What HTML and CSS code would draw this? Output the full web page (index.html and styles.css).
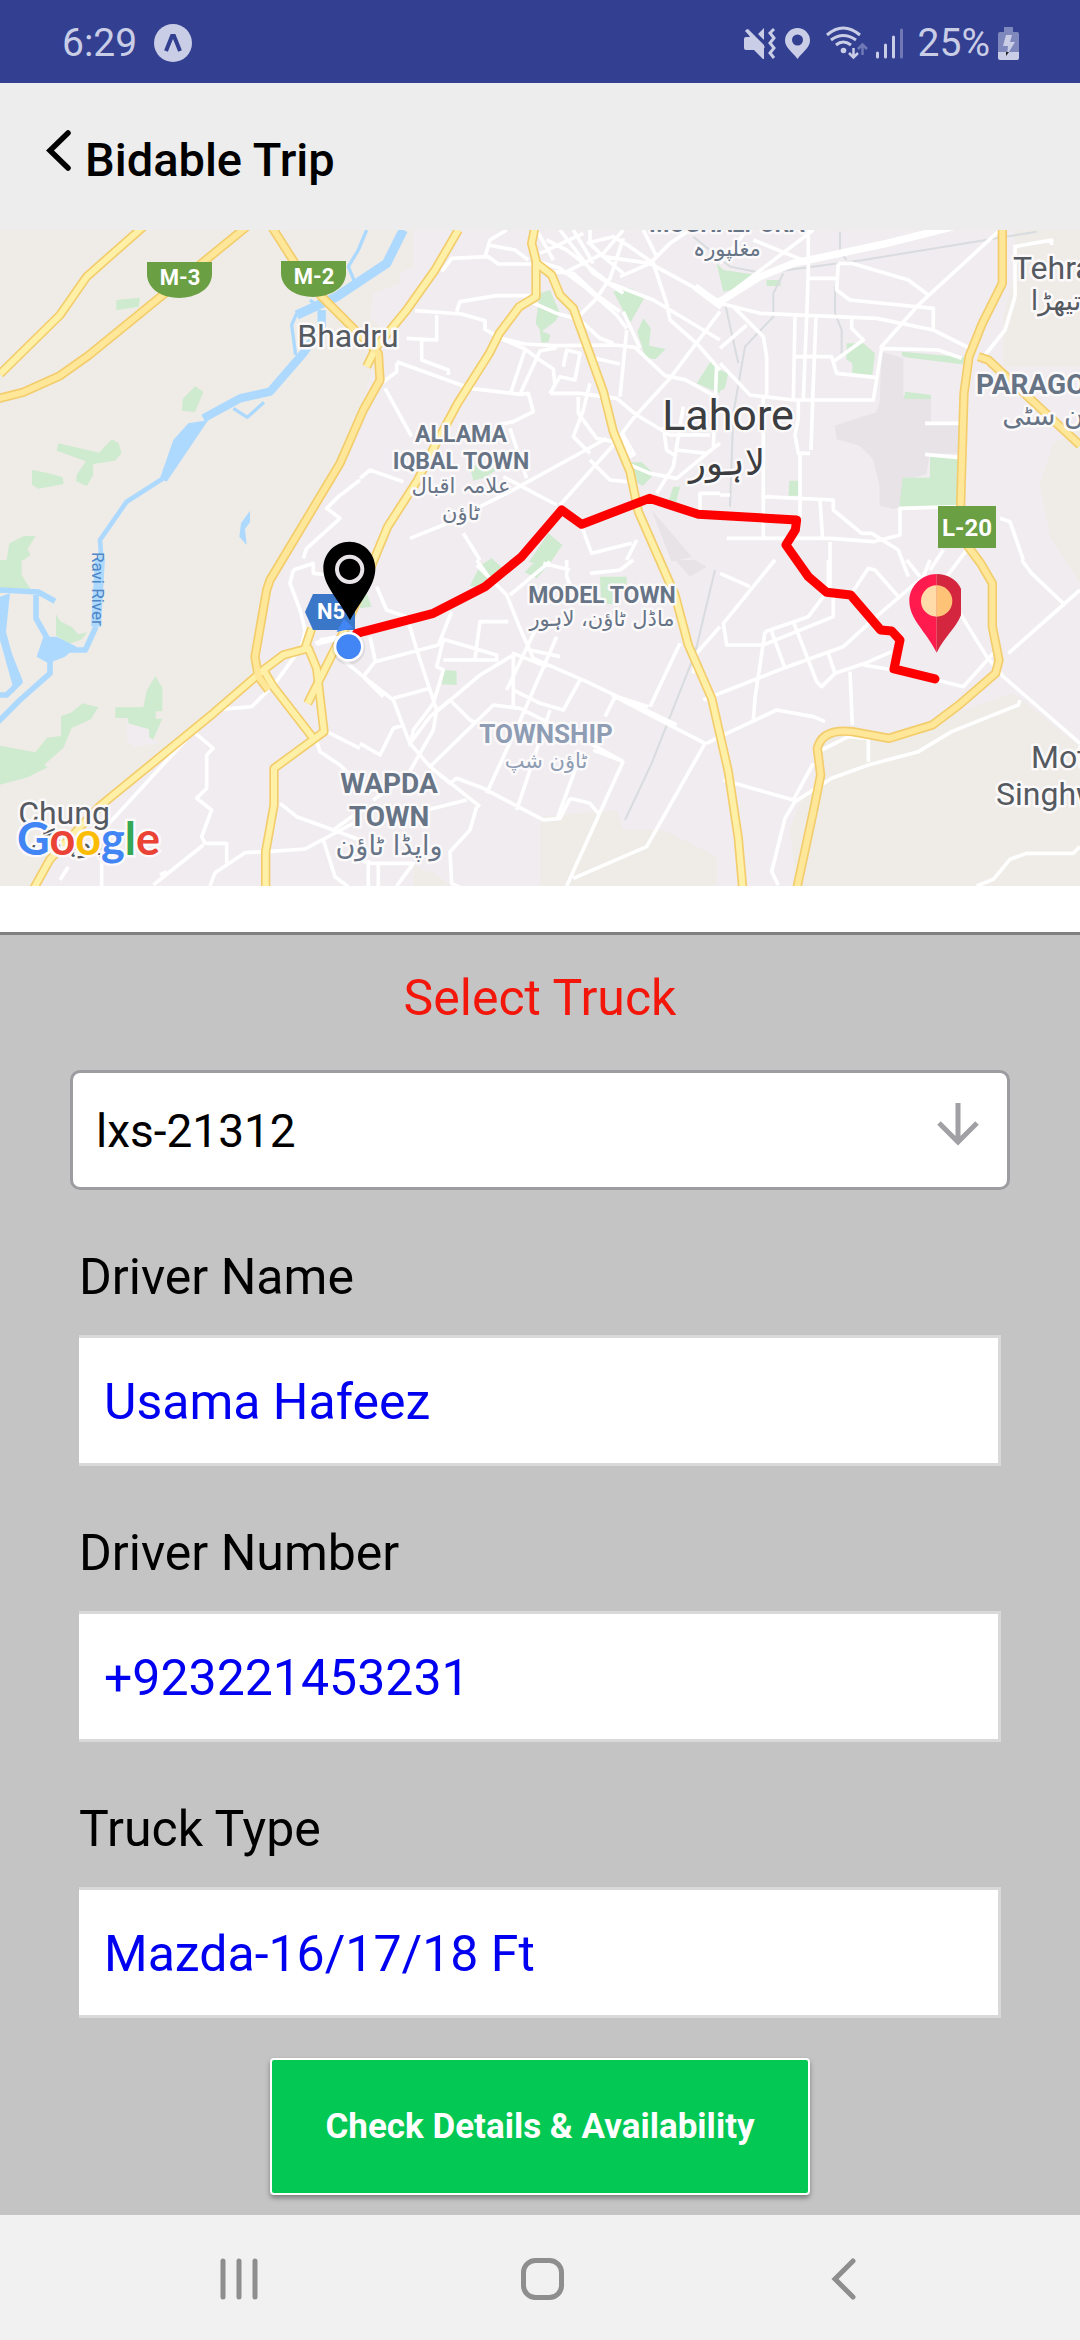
FILE: index.html
```html
<!DOCTYPE html>
<html lang="en">
<head>
<meta charset="utf-8">
<meta name="viewport" content="width=device-width, initial-scale=1">
<title>Bidable Trip</title>
<link rel="stylesheet" href="styles.css">
</head>
<body>
<div class="status-bar">
  <div class="status-left">
    <span>6:29</span>
    <svg class="expo-icon" width="38" height="38" viewBox="0 0 38 38"><circle cx="19" cy="19" r="19" fill="#c9cde6"/><path d="M12 27 L18 12 H20 L26 27" fill="none" stroke="#334091" stroke-width="4"/></svg>
  </div>
  <div class="status-right">
    <svg width="124" height="36" viewBox="743 23 124 36" fill="#c9cde6">
      <path d="M743 37q0-2 2-2h4l-4-6 2-2 16 16v14h-1l-9-9h-8q-2 0-2-2zM757 32l6-6v12z"/>
      <path d="M745 28L763 46" stroke="#c9cde6" stroke-width="3"/>
      <path d="M773 27l-4 4 4 5-4 5 4 5-4 5 4 5" fill="none" stroke="#c9cde6" stroke-width="3"/>
      <path fill-rule="evenodd" d="M796.500 26a12.500 12.500 0 0 0-12.500 12.500c0 7 7 11 12.500 18.500 5.500-7.500 12.500-11.500 12.500-18.500a12.500 12.500 0 0 0-12.500-12.500zm0 6.500a5.500 5.500 0 1 1 0 11 5.500 5.500 0 0 1 0-11z"/>
      <path d="M826 33q16-14 33 0M830 38q12-9 25 0M835 43q7-6 15 0" fill="none" stroke="#c9cde6" stroke-width="3"/>
      <circle cx="842.500" cy="48.500" r="2.800"/>
      <path d="M852.500 46v9M848 51l4.500 4.500 4.500-4.500" fill="none" stroke="#c9cde6" stroke-width="2.500"/>
      <path d="M861.500 53v-10M857 47l4.500-4.500 4.500 4.500" fill="none" stroke="#7079b5" stroke-width="2.500"/>
    </svg>
    <svg width="28" height="36" viewBox="875 23 28 36" fill="none" stroke="#c9cde6" stroke-width="3" stroke-linecap="round"><path d="M876.500 51v4M884.500 43v12M892.500 35v20"/><path d="M900.500 28v27" stroke="#7079b5"/></svg>
    <span class="battery-level">25%</span>
    <svg width="22" height="36" viewBox="997 23 22 36"><path d="M1003 25h9v5h4q2 0 2 2v19h-21v-19q0-2 2-2h4z" fill="#7f88bd"/><path d="M997 50h21v6q0 2-2 2h-17q-2 0-2-2z" fill="#c9cde6"/><path d="M1005 33h6l-2 7h5l-8 13 1-9h-5z" fill="#c9cde6"/><path d="M1005 50h3l-3 4z" fill="#222"/></svg>
  </div>
</div>

<header class="app-header">
  <button class="back-button" type="button" aria-label="Back">
    <svg width="26" height="42" viewBox="0 0 26 42"><path d="M22 3 L4 20.500 L22 38" fill="none" stroke="#000" stroke-width="5.500" stroke-linecap="round"/></svg>
  </button>
  <h1 class="header-title">Bidable Trip</h1>
</header>

<div class="map">
<svg class="map-canvas" viewBox="0 0 1080 656" preserveAspectRatio="xMidYMid slice" role="img" aria-label="Map of Lahore with trip route">
  <rect width="1080" height="656" fill="#efece7"/>
  <g transform="scale(0.33333)">
    <!-- built-up land -->
    <path fill="#f0ecef" d="M1240 0V110L1200 130V160L1120 190 1110 260 1150 300 1080 550 1020 700 830 990 800 1040 765 1240 790 1320 650 1450 300 1730 90 1968H1240V1900L1330 1968H1620V1760L1850 1740 1870 1800 1990 1800 2070 1840 2150 1880V1968H2390L2370 1800 2400 1720 2460 1640 2460 1510 2660 1520 3040 1390 3240 1550V1060L3150 920 3120 760 3160 640 3240 600V410H3010V260L3045 120V0z"/>
    <path fill="#efece7" d="M1285 1968v-50l70 50zM1620 1780l210-25 30 48 110-5 70 40-40 40 20 90H1620zM1950 1880l20-50 40 10 10 70 50-40 50 20 10 78h-200z"/>
    <path fill="#f0ecef" d="M380 1470h70v50l30 20-80 10-20-20z"/>
    <path fill="#e7e3e7" d="M2645 365l65 20v110h83v85h86v90l-90 2-10 60-60 20v75l-40 10-40-10v-60l-20-80-40-40-70-20v-10l-5-30 45-15 80-25 10-30zM1955 840l120 140-60 15zM2025 990h60l35 20-50 30z"/>
    <!-- parks -->
    <g fill="#ceeacf">
      <path d="M349 210l71-7-4 27-67 11zM585 468l25 18-25 60-39-4 2-34zM175 640l122 28 38-40 20 10 10 30-20 24-66 10 1 32-20 34-32-14 2-20 28-40-88-32zM96 720l44 8 48 14 3 20-75 14-20-12zM20 990l8-50 44-22h35l-25 40 10 16-20 16z"/>
      <path d="M0 990h65v45l28 45-93 10zM168 1153l12 20 35 18 20 22 28-6-20 22-35 12-40-24zM0 1547l106 20 35-44 42-5v-60l30-10 35-28 47 12-22 36-58 26-25 60-57 50 10 8-60 30-83 22zM466 1338l21 36v70h-20v22h20l-28 64-12-10v-22l-62-18v-16h-39v-32h84l10-50z"/>
      <path d="M1080 1060l20 30 15 40-35 5zM1645 910l42 35-40 60-60-8zM1475 985l45 40-70 50-40-8 30-60zM1600 1000h50l-40 45-36-18zM1330 1320l40 3v42l-44-2zM1410 710l40-10 40 20-40 24-30 8zM1620 190l30-10 30 70-14 24-40 30 25 10-5 22-22 2-5-40-12-18zM1840 185l50-10 45 25-45 80zM1930 265l22 30-5 52 50 10-30 30-30-2-25-80zM2135 390l25 20v80l-70-30zM1880 697h45l38 35-35 36-45-28zM2020 770h20l-15 60h-25zM2150 100l20 20 100 15-50 40-50 10zM2540 340h50l35 30-8 65-60-5v-30l-18-12zM2300 150h42v18h-42zM2706 365l200 18-20 20-160-20-20-5zM2715 485l78 10v12h-80zM2368 752h28v45h-30zM2790 680h88v145l-180 8 10-90h82zM2160 420l25 10-10 45-15 8zM1800 1040h80v45h-36v37h-40z"/>
    </g>
    <!-- water -->
    <g fill="none" stroke="#add9fe" stroke-linejoin="round">
      <path stroke-width="28" d="M1210 0L1160 100 1010 200 890 255"/>
      <path stroke-width="10" d="M1100 0l-25 60-30 50 25 60M890 250l-15 35 12 90"/>
      <path stroke-width="25" d="M965 240v50L910 370 810 485 720 505 610 565"/>
      <path stroke-width="10" d="M700 535l42 27 50-45M930 210l30 25"/>
      <path stroke-width="14" d="M490 745L380 815 300 930 305 1000"/>
      <path stroke-width="30" d="M300 985L288 1190"/>
      <path stroke-width="17" d="M288 1190l-32 70-70 0M150 1290v40l-90 80-70 70M108 1095v70l45 80M0 1080l115 6 50 28M0 1205l60 150-40 40H0"/>
    </g>
    <path fill="#add9fe" d="M625 570L500 755 480 745 520 630 565 580zM0 1100l30-10-12 115 40 150-15 30L0 1230zM130 1220l40 0 60 30-35 30-50 20-35-20zM750 842v35l-15 20 5 48-22-25 5-40z"/>
    <!-- rail -->
    <path fill="none" stroke="#d9dcdf" stroke-width="6" d="M2520 5v60l20 25M2080 20l110 90 100 20 300-40 520-85M2350 130l-30 60v70l-85 90-35 200-10 280M2505 170v80l20 50v80M2175 220l40 180M2145 1020l-60 250-130 330-80 170"/>
    <!-- streets -->
    <g class="streets">
      <g transform="translate(1080)"><path d="M165 242l140 10 70 20v25l40 25 80 35 40 30 45 30 5 50M290 245l10-30 110-18h100M230 255v75l-90-5M185 330v60l80 30v15M110 395l110 40 110 40 150 18 60-130 50-10M75 475l80 145M110 400v25l-40 30M480 493l25-3 15 55-60 30-50 10M450 495l45-135M405 320l90 22 90 5 180-2 60 7 90 85 60 12 100 55M245 125l30-40 110-5 30 22h130M375 80l15-50 50-30M385 45l80 15 40 30M520 90l80 25 80 60 90 80 30 40M580 125l60 5 70 65 70 50M610 130l120-60 60-70M560 30l60 30 130 100 130 50 200 120M530 0l50 90M600 0l100 130 90 60M690 0v40l40 40 60 50M640 0l60 100M500 210l90 40 70 20 60 55 40 15M660 255l50-50 40-60 40-120M540 70l130-60M790 245l50 110M780 140l90-40 60-60 60-40M730 80l140 20 210 115M680 40l80-20 50 30 70 50 40 120 10 50 80 70 70 80M850 0l40 80M570 490l30-50 45 10 15-80-40-10-10 50M570 490h90l110 15 60 50 100 60 120 0M800 300l-20 200M685 380l95 22M655 500v50l55 75 50 10M690 460l-20 80-30 80 50 50M150 925l100-40 50-20M310 910l50 80M300 890l60-60 90-45 200-110 90-50M600 825l160-180 60-80 110-120 150-200M430 740l160 85M450 595l50 150M0 745l30-25 100 35M665 890l30 80 120-30M830 930l-30 60M800 700l70 30 80 15 110-90 10-250M890 790l50-80 30-180M950 660l90 10 40-30M910 590l10 70 30 20M1020 850v-60h60M690 690l60 60 50 5"/></g>
      <g transform="translate(2160)"><path d="M0 220l120 30 350 15 170 35 110 55M265 0v120l-5 140-10 250M225 260l-5 250M288 260l-10 250-5 150M0 400l90 95 130 15h240l25-155 170 5 70 25M480 355l120-135L840 0M100 30l160 65M355 100h40l170 50 60 45M355 100l-5 80 40 30 250 25v60M270 145h80M395 265l0 30 35 35-90 65M225 380h110l15 50 115 12M80 285L0 355M40 230l90 90 10 60v120M885 200V50l110-20v15M885 200l-30 100-60 75M615 580h105M615 673l105 10M235 505v60l-10 50 10 55h35M240 670v190M130 500v420M130 800l210 10v30l85 70h30l80 50 30 80M0 795h30M20 925h310l130 10 80-20v-80l180-5M300 810l8 120M330 935v160M840 865l30 10 40 115M670 960l-40 60M740 960l-60 80M280 0l-250 190M0 100l50-60 30-40"/></g>
      <g transform="translate(0 990)"><path d="M1080-240l-65 50-35 35 40 30-100 90-10 30M880 30l-10 40 30 80 15 60-10 50-80 110-70 70-110 10M880 30l60-20v30l50 5M945 250l60-20M1030 300l60 50 60 60M580 515l60 50-20 20v100l-30 30 45 35-30 80 10 20h65v60M580 515L300 820M980 515l100 50M945 530l15 45 60 40 60 60M840 730l50 40 110 40 70-50M610 855l-150 120M180 960l25-40M305 978v-80M630 978l15-40 90-60 70-3 110-8 150-80M970 840l35 110 40 30M1000 810l80 30M480 945l20-10"/></g>
      <g transform="translate(1080 990)"><path d="M10 350l90 70 30 80 20 50 60 70 150 120M10 350l35-45 190-50 40-100M50 80l30 70 60 20 40 130 50 150-10 60-80 140-100 70M30 230l15 70M0 550l60 35 40-80 30-10M100 415l110-30M350 15l90 90 40 100 40 90 160 70 270 130M350 0l35 50M450 105l120-100M240 235l170 50v15H250M345 295l15-110h85M250 240l-20 80 20 10-30 100-60 80-10 50M460 280v110l80 40 70 20 50-90M460 285l-100 60-130 110M150 550l60-80 60-50 60 60 20 10M210 620l190-185 80 10 120 60 100 50 90 50M380 700l110-240 100-230M470 750l100-300M560 320l-100-40v160M440 390l100-210M600 290l-90-20M590 780l70-190M630 715l60 15 25 30M210 620l60 50 20-15 80 30 180 95 50-5 30-60M350 740l-20 70-60 65 5 95 30 15M765 410l-30 60M765 410l270 140-175 310-220 95M620 978l170-375M700 570l90 35M870 440l90-190M865 440l-110-35M1000 340l10-60 70-80M1030 420l50-20M1040 550l40-20M620 0v50l30 70M690 40l90-10 40-30M550 10l80 20M200 750l120-30M30 910h130l-50 68M25 900v78M55 910v68M0 900l30 10"/></g>
      <g transform="translate(2160 990)"><path d="M0 400l190-75 180-65 110-100 130-110 20-50M165 0L10 190l10 65 110 0 210-85v-70M0 40l90 40M135 215l130-45 60-80V0M135 215l-30 200-5 65M0 530l170-80 110 20 35 15M220 185l70 180 15 15 40-40 90-30 80-35M155 215l40 110M325 280l20 60M390 335l7 160M395 100l50-75 20 5 70 80M430 315l90 15M650 360l80 20 90-100M720 160l80 130 50 60 230 200M900 420l-5 15-200 80-100 60-150 40-110 40-110 70-30 50-40 160 20 40M10 660l210 60 60-110M305 570l80-40 60 5v70M865 280l215-190M905 0l30 40 95 90M770 978l50-20 50-60 50-18h140l20-20M560 0l40 50M400 530h10"/></g>
      <path class="wide" d="M2160 215l120-75 100-40 280-60 200-50M1900 680l-40-70M2165 230l-80-60"/>
    </g>
    <!-- highways: casing, then fill -->
    <defs>
      <g id="major">
        <path d="M0 432L180 255 260 140 430-10"/>
        <path d="M1375 0l-70 120-85 120-90 110-30 60"/>
        <path d="M1605-10l-10 50 15 60 45 35 25 60 40 40 90 250 30 120 50 120 25 120 110 250 40 150 70 160 50 220 30 200 14 160"/>
        <path d="M1608 90v110l-50 30-60 80-30 60-95 150-70 130-50 100-90 140-120 290-120 240"/>
      </g>
      <g id="motorway">
        <path d="M-10 507l80-20 110-50 85-60L740-10"/>
        <path d="M815-10l70 110 80 100 100 100 70 70 5 80-50 90-70 160-210 350-10 30-35 200 10 60 30 40"/>
        <path d="M3007-10v170l-60 120-40 100-15 110-10 330 0 100 60 80 35 60v130l20 100-10 40-110 95-80 60-130 40-110-20q-90-10-105 50l10 80-20 100-60 280"/>
        <path d="M2935 380l30 10 275 255"/>
      </g>
      <path id="trunk" d="M100 1978l50-90 150-160L640 1450l150-130 60-45 75-20 25 60 22 190-150 110 0 110-25 140v140M790 1320l30 50 120 155M935 1195l-20 60"/>
    </defs>
    <g fill="none" stroke-linejoin="round">
      <g stroke="#f3cd6c" stroke-width="28"><use href="#major"/><use href="#motorway"/><use href="#trunk"/></g>
      <g stroke="#fff0a8" stroke-width="18"><use href="#major"/><use href="#trunk"/></g>
      <use href="#motorway" stroke="#ffe79a" stroke-width="18"/>
    </g>
    <path d="M1080 1215L950 1248l10-25 40-5z" fill="#fff"/>
  </g>

  <!-- road shields -->
  <path fill="#6b9f43" d="M147 32h65v13c-2 30-63 31-65 0zM281 31h65v13c-2 30-63 31-65 0zM938 276h58v42h-58z"/>
  <path fill="#3a77c8" d="M313 364h42v36h-42l-8-18z"/>
  <g class="shield">
    <text x="180" y="55">M-3</text>
    <text x="314" y="54">M-2</text>
    <text x="967" y="306" class="shield-large">L-20</text>
    <text x="331" y="389">N5</text>
  </g>

  <!-- place names -->
  <g class="place">
    <text x="348" y="117" class="locality">Bhadru</text>
    <text x="64" y="594" class="locality">Chung</text>
    <text x="70" y="622" class="locality urdu urdu-medium">چوہنگ</text>
    <text x="1013" y="49" class="locality from-left">Tehra</text>
    <text x="1056" y="80" class="locality urdu urdu-medium">تیھڑا</text>
    <text x="1031" y="538" class="locality from-left">Mot</text>
    <text x="996" y="575" class="locality from-left">Singhw</text>
    <text x="728" y="200" class="city">Lahore</text>
    <text x="727" y="245" class="city urdu urdu-large">لاہور</text>
    <text x="727" y="2" class="area">MUGHALPURA</text>
    <text x="727" y="26" class="area urdu">مغلپورہ</text>
    <text x="461" y="212" class="area">ALLAMA</text>
    <text x="461" y="239" class="area">IQBAL TOWN</text>
    <text x="461" y="263" class="area urdu">علامہ اقبال</text>
    <text x="461" y="290" class="area urdu">ٹاؤن</text>
    <text x="602" y="373" class="area">MODEL TOWN</text>
    <text x="602" y="396" class="area urdu">ماڈل ٹاؤن، لاہور</text>
    <text x="976" y="164" class="area area-large from-left">PARAGON</text>
    <text x="1043" y="195" class="area urdu urdu-medium">ن سٹی</text>
    <text x="546" y="513" class="area area-medium faded">TOWNSHIP</text>
    <text x="546" y="538" class="area urdu faded">ٹاؤن شپ</text>
    <text x="389" y="563" class="area area-large">WAPDA</text>
    <text x="389" y="596" class="area area-large">TOWN</text>
    <text x="389" y="625" class="area urdu urdu-medium">واپڈا ٹاؤن</text>
  </g>
  <text class="river" transform="translate(92 322) rotate(90)">Ravi River</text>

  <!-- trip route and pins -->
  <g transform="scale(0.33333)">
    <path fill="none" stroke="#f00" stroke-width="27" stroke-linecap="round" stroke-linejoin="round" d="M1070 1210L1300 1150 1455 1070 1565 980 1685 840 1745 883 1948 805 2095 853 2390 870 2386 900 2358 945 2425 1040 2480 1087 2552 1095 2642 1200 2675 1203 2700 1230 2682 1317 2805 1347"/>
    <circle cx="1046" cy="1254" r="50" fill="#000" opacity=".08"/>
    <path fill="#4285f4" d="M1010 1206l22-40 28 28z"/>
    <circle cx="1046" cy="1250" r="41" fill="#4285f4" stroke="#fff" stroke-width="8"/>
    <path d="M1048 935c-44 0-78 36-78 80 0 52 42 88 80 156 38-68 76-104 76-156 0-44-34-80-78-80z"/>
    <circle cx="1049" cy="1018" r="38" fill="none" stroke="#e9e4e8" stroke-width="12"/>
    <path fill="#ff1b4d" d="M2810 1032c-45 0-82 37-82 81 0 55 50 90 82 155z"/>
    <path fill="#d4273f" d="M2810 1032c30 0 60 15 73 44v80c-15 38-50 65-73 112z"/>
    <path fill="#ffdba9" d="M2810 1066a47 47 0 0 0 0 94z"/>
    <path fill="#ffc377" d="M2810 1066a47 47 0 0 1 0 94z"/>
  </g>
  <text class="map-brand" x="17" y="625"><tspan fill="#4285f4">G</tspan><tspan fill="#ea4335">o</tspan><tspan fill="#fbbc05">o</tspan><tspan fill="#4285f4">g</tspan><tspan fill="#34a853">l</tspan><tspan fill="#ea4335">e</tspan></text>
</svg>
</div>

<main class="panel">
  <form class="trip-form">
    <label class="form-title" for="truck">Select Truck</label>
    <div class="select-box">
      <select id="truck" class="truck-select"><option>lxs-21312</option></select>
      <svg class="select-arrow" width="42" height="44" viewBox="0 0 42 44"><path d="M21 1V38M2 21L21 40 40 21" fill="none" stroke="#a0a0a5" stroke-width="5"/></svg>
    </div>
    <div class="field">
      <label for="driver-name">Driver Name</label>
      <input id="driver-name" type="text" value="Usama Hafeez">
    </div>
    <div class="field">
      <label for="driver-number">Driver Number</label>
      <input id="driver-number" type="tel" value="+923221453231">
    </div>
    <div class="field">
      <label for="truck-type">Truck Type</label>
      <input id="truck-type" type="text" value="Mazda-16/17/18 Ft">
    </div>
    <button class="submit-button" type="button">Check Details &amp; Availability</button>
  </form>
</main>

<nav class="nav-bar">
  <button type="button" aria-label="Recent apps"><svg width="44" height="44" viewBox="0 0 44 44"><path d="M5 4V40M21 4V40M37 4V40" stroke="#8e8e8e" stroke-width="5" stroke-linecap="round"/></svg></button>
  <button type="button" aria-label="Home"><svg width="44" height="44" viewBox="0 0 44 44"><rect x="3.500" y="3.500" width="38" height="37" rx="12" fill="none" stroke="#8e8e8e" stroke-width="5"/></svg></button>
  <button type="button" aria-label="Back"><svg width="44" height="44" viewBox="0 0 44 44"><path d="M31 4L13 22 31 40" fill="none" stroke="#8e8e8e" stroke-width="5" stroke-linecap="round"/></svg></button>
</nav>
</body>
</html>
```

FILE: styles.css
```css
* {
  box-sizing: border-box;
}

body {
  margin: 0;
  min-height: 100vh;
  display: flex;
  flex-direction: column;
  background: #fff;
  color: #000;
  font-family: Roboto, "DejaVu Sans", sans-serif;
}

button {
  padding: 0;
  border: 0;
  background: none;
  font-family: inherit;
}

svg {
  display: block;
}

.status-bar {
  display: flex;
  justify-content: space-between;
  align-items: center;
  height: 83px;
  padding: 2px 60px 0 62px;
  background: #334091;
  color: #c9cde6;
  font-size: 39px;
}

.status-left,
.status-right {
  display: flex;
  align-items: center;
}

.status-left {
  gap: 17px;
}

.status-right {
  gap: 8px;
}

.battery-level {
  margin-left: 6px;
}

.app-header {
  display: flex;
  align-items: center;
  gap: 13px;
  height: 147px;
  padding-left: 46px;
  background: #ededed;
}

.back-button {
  padding-bottom: 12px;
}

.header-title {
  margin: 6px 0 0;
  font-size: 47px;
  font-weight: 500;
  line-height: 60px;
}

.map {
  margin-bottom: 46px;
}

.map-canvas {
  width: 100%;
  aspect-ratio: 1080 / 656;
}

.streets {
  fill: none;
  stroke: #fff;
  stroke-width: 11;
  stroke-linejoin: round;
}

.streets .wide {
  stroke-width: 22;
}

.shield {
  fill: #fff;
  font-size: 22px;
  font-weight: 700;
  text-anchor: middle;
}

.shield-large {
  font-size: 24px;
}

.place {
  text-anchor: middle;
  paint-order: stroke;
  stroke: #fbf9fa;
  stroke-width: 5px;
  stroke-linejoin: round;
}

.locality {
  fill: #555a61;
  font-size: 32px;
}

.city {
  fill: #3c3d40;
  font-size: 43px;
}

.area {
  fill: #677486;
  font-size: 23px;
  font-weight: 700;
}

.area-medium {
  font-size: 26px;
}

.area-large {
  font-size: 28px;
}

.faded {
  fill: #8f9db4;
}

.from-left {
  text-anchor: start;
}

.urdu {
  font-family: "DejaVu Sans", sans-serif;
  font-size: 21px;
  font-weight: 400;
}

.urdu-medium {
  font-size: 27px;
}

.urdu-large {
  font-size: 35px;
}

.river {
  fill: #4f86c6;
  font-size: 17px;
}

.map-brand {
  font-family: Lato, sans-serif;
  font-size: 45px;
  font-weight: 700;
  paint-order: stroke;
  stroke: #fbf9fa;
  stroke-width: 5px;
}

.panel {
  flex: 1;
  padding: 33px 70px 20px;
  border-top: 3px solid #808080;
  background: #c4c4c4;
}

.trip-form {
  display: flex;
  flex-direction: column;
}

.form-title {
  color: #f3160b;
  font-size: 50px;
  line-height: 60px;
  text-align: center;
}

.select-box {
  display: grid;
  align-items: center;
  margin: 42px 0 0;
}

.truck-select {
  grid-area: 1 / 1;
  width: 100%;
  height: 120px;
  padding: 2px 23px 0;
  border: 3px solid #9d9da1;
  border-radius: 10px;
  appearance: none;
  background: #fff;
  color: #000;
  font-family: inherit;
  font-size: 46px;
}

.select-arrow {
  grid-area: 1 / 1;
  justify-self: end;
  margin: 0 31px 12px 0;
  pointer-events: none;
}

.field {
  display: flex;
  flex-direction: column;
  gap: 28px;
  margin: 57px 9px 0;
}

.field label {
  font-size: 50px;
  line-height: 60px;
}

.field input {
  width: 100%;
  height: 131px;
  padding: 2px 24px 0 25px;
  border: 3px solid #d9d9d9;
  border-left: 0;
  border-radius: 0;
  background: #fff;
  color: #0000f0;
  font-family: inherit;
  font-size: 50px;
}

.submit-button {
  align-self: center;
  height: 137px;
  margin-top: 40px;
  padding: 0 53px;
  border: 2px solid #fff;
  border-radius: 4px;
  background: #03c853;
  box-shadow: 0 3px 5px rgba(0, 0, 0, 0.35);
  color: #fff;
  font-size: 35px;
  font-weight: 700;
}

.nav-bar {
  display: flex;
  align-items: center;
  justify-content: space-around;
  height: 126px;
  padding: 2px 85px 0 89px;
  background: #f1f1f1;
}
```
